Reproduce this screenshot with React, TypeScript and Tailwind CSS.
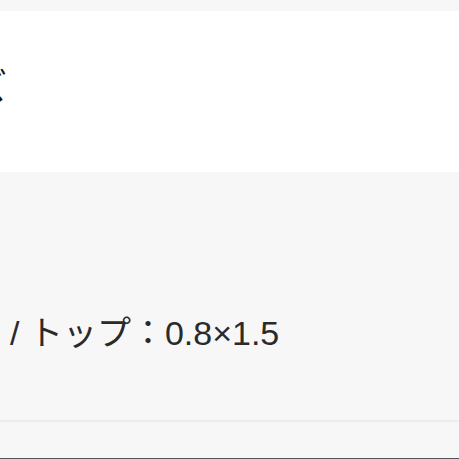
export default function App() {
  return (
    <div
      className="w-[459px] h-[459px] overflow-hidden flex flex-col bg-[#f7f7f7]"
      style={{ fontFamily: '"Liberation Sans", "Noto Sans CJK JP", sans-serif' }}
    >
      {/* top gap */}
      <div className="h-[11px] shrink-0 bg-[#f7f7f7]" />

      {/* heading card */}
      <div className="h-[161px] shrink-0 bg-white flex items-center overflow-hidden">
        <span className="ml-[-29px] mb-[8px] text-[36px] leading-[36px] text-[#111]">ズ</span>
      </div>

      {/* size spec */}
      <div className="h-[248px] shrink-0 pt-[144px] pl-[10px]">
        <p className="text-[34px] leading-[34px] text-[#2a2a2a] whitespace-nowrap">
          / トップ：0.8×1.5
        </p>
      </div>

      <div className="h-[2px] shrink-0 bg-[#ececec]" />
      <div className="flex-1 bg-[#f7f7f7]" />
      <div className="h-[1px] shrink-0 bg-[#555]" />
    </div>
  );
}
